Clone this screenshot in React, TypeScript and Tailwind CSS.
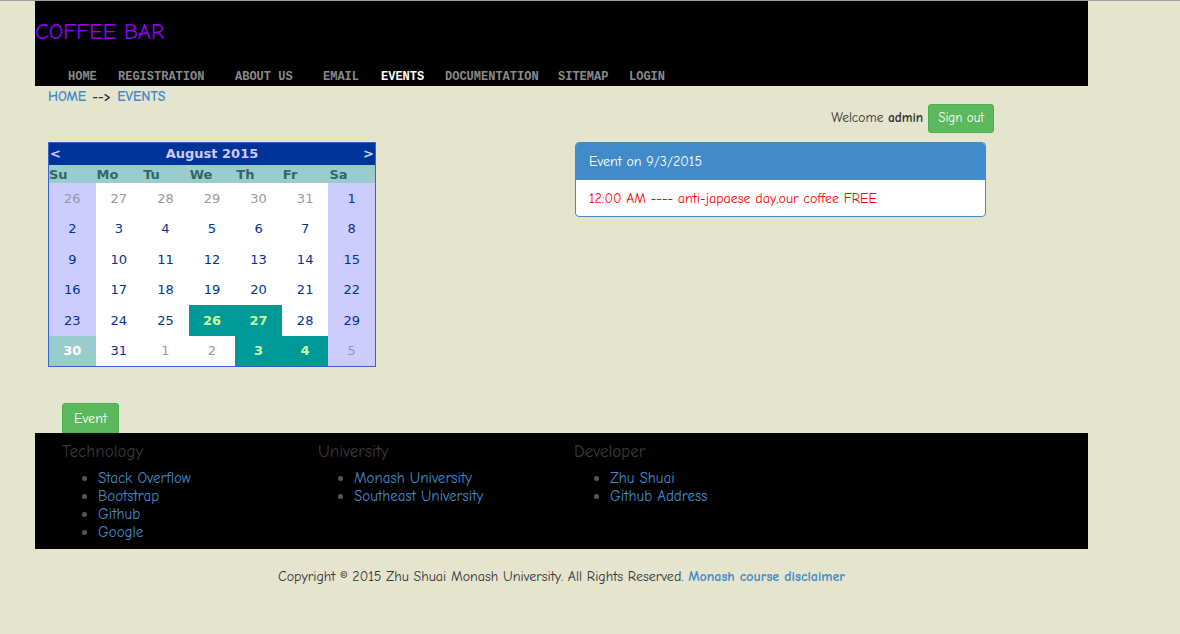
import React from 'react';

const NAV = ['HOME', 'REGISTRATION', 'ABOUT US', 'EMAIL', 'EVENTS', 'DOCUMENTATION', 'SITEMAP', 'LOGIN'];
const NAV_X = [33, 83, 200, 288, 346, 410, 523, 594];

type Day = { d: number; other?: boolean; event?: boolean; today?: boolean };

const weeks: Day[][] = [
  [{ d: 26, other: true }, { d: 27, other: true }, { d: 28, other: true }, { d: 29, other: true }, { d: 30, other: true }, { d: 31, other: true }, { d: 1 }],
  [2, 3, 4, 5, 6, 7, 8].map((d) => ({ d })),
  [9, 10, 11, 12, 13, 14, 15].map((d) => ({ d })),
  [16, 17, 18, 19, 20, 21, 22].map((d) => ({ d })),
  [{ d: 23 }, { d: 24 }, { d: 25 }, { d: 26, event: true }, { d: 27, event: true }, { d: 28 }, { d: 29 }],
  [{ d: 30, today: true }, { d: 31 }, { d: 1, other: true }, { d: 2, other: true }, { d: 3, other: true, event: true }, { d: 4, other: true, event: true }, { d: 5, other: true }],
];

const footerCols = [
  { title: 'Technology', links: ['Stack Overflow', 'Bootstrap', 'Github', 'Google'] },
  { title: 'University', links: ['Monash University', 'Southeast University'] },
  { title: 'Developer', links: ['Zhu Shuai', 'Github Address'] },
];

const comic = { fontFamily: '"Comic Sans MS", "Comic Neue", "Noto Sans", sans-serif' };

function Calendar() {
  return (
    <div className="w-[328px] border border-[#3366cc] font-['Verdana','DejaVu_Sans',sans-serif] text-[13px]">
      <div className="bg-[#003399] text-[#ccccff] font-bold h-[22px] flex items-center justify-between px-[1px]">
        <span>&lt;</span>
        <span>August 2015</span>
        <span>&gt;</span>
      </div>
      <div className="bg-[#99cccc] text-[#336666] font-bold h-[18px] grid grid-cols-7 items-center">
        {['Su', 'Mo', 'Tu', 'We', 'Th', 'Fr', 'Sa'].map((w, i) => (
          <span key={w} className={i === 0 ? 'text-left' : 'text-left pl-[1px]'}>
            {w}
          </span>
        ))}
      </div>
      {weeks.map((wk, r) => (
        <div key={r} className="grid grid-cols-7 h-[30.5px]">
          {wk.map((c, i) => {
            const weekend = i === 0 || i === 6;
            let cls = 'bg-white';
            if (weekend) cls = 'bg-[#ccccff]';
            if (c.event) cls = 'bg-[#009999] text-[#ccff99] font-bold';
            else if (c.today) cls = 'bg-[#99cccc] text-white font-bold';
            else if (c.other) cls += ' text-[#999999]';
            else cls += ' text-[#003399]';
            return (
              <div key={i} className={`flex items-center justify-center ${cls}`}>
                {c.d}
              </div>
            );
          })}
        </div>
      ))}
    </div>
  );
}

export default function App() {
  return (
    <div className="min-h-[634px] w-full bg-[#e5e4cf] border-t border-[#a0a0a0]" style={comic}>
      <div className="w-[1053px] ml-[35px]">
        <header className="bg-black h-[85px] relative">
          <div className="absolute left-0 top-[15px] text-[#9900ff] text-[22.5px] leading-[32px]">COFFEE BAR</div>
          {NAV.map((n, i) => (
            <span
              key={n}
              className={`absolute top-[68px] text-[12px] leading-[16px] font-bold font-['Liberation_Mono','DejaVu_Sans_Mono',monospace] ${
                n === 'EVENTS' ? 'text-white' : 'text-[#8a8a8a]'
              }`}
              style={{ left: NAV_X[i] }}
            >
              {n}
            </span>
          ))}
        </header>

        <div className="pl-[13px] pt-[2px] text-[14px] leading-[18px] font-bold">
          <span className="text-[#428bca]">HOME</span>
          <span className="text-[#333] mx-[6px]">--&gt;</span>
          <span className="text-[#428bca]">EVENTS</span>
        </div>

        <div className="flex justify-end items-center pr-[94px] h-[30px] -mt-[3px]">
          <span className="text-[13.5px] text-[#333] mr-[5px]">
            Welcome <b>admin</b>
          </span>
          <button className="bg-[#5cb85c] border border-[#4cae4c] text-white text-[13px] h-[29px] px-[9px] rounded-[3px]">
            Sign out
          </button>
        </div>

        <div className="flex mt-[9px] pl-[13px] items-start">
          <Calendar />
          <div className="ml-[199px] w-[411px] h-[75px] border border-[#428bca] rounded-[4px] bg-white overflow-hidden">
            <div className="bg-[#428bca] text-white text-[14px] h-[37px] flex items-center px-[13px]">Event on 9/3/2015</div>
            <div className="text-[#ff0000] text-[14px] h-[36px] flex items-center px-[13px]">
              12:00 AM ---- anti-japaese day,our coffee FREE
            </div>
          </div>
        </div>

        <div className="pl-[27px] mt-[36px]">
          <button className="bg-[#5cb85c] border border-[#4cae4c] text-white text-[14px] h-[30px] w-[57px] rounded-t-[3px]">
            Event
          </button>
        </div>

        <footer className="bg-black h-[116px] flex pl-[27px] pt-[8px]">
          {footerCols.map((col) => (
            <div key={col.title} className="w-[256px]">
              <div className="text-[#3a3a3a] text-[17px] leading-[22px]">{col.title}</div>
              <ul className="list-disc pl-[36px] mt-[6px] text-[#555] text-[15px] leading-[18px]">
                {col.links.map((l) => (
                  <li key={l}>
                    <span className="text-[#428bca]">{l}</span>
                  </li>
                ))}
              </ul>
            </div>
          ))}
        </footer>

        <div className="text-center text-[14px] text-[#333] mt-[17px]">
          Copyright © 2015 Zhu Shuai Monash University. All Rights Reserved.{' '}
          <b className="text-[#428bca]">Monash course disclaimer</b>
        </div>
      </div>
    </div>
  );
}
